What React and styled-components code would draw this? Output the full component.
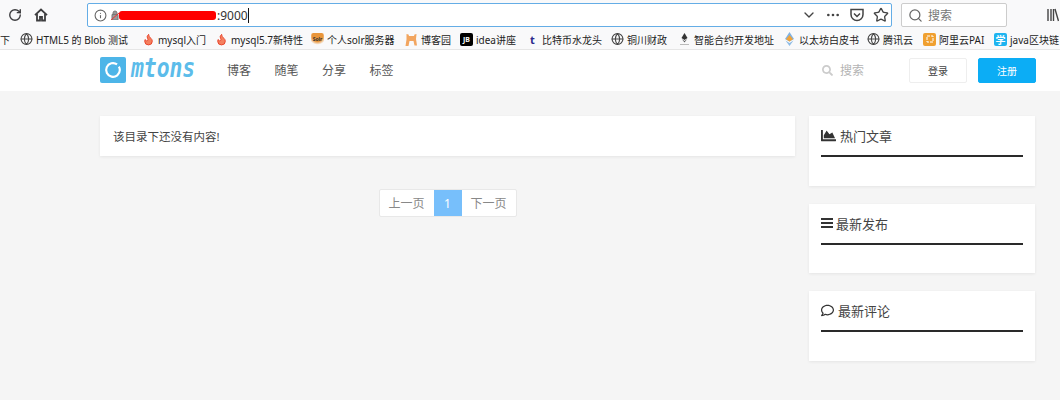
import styled, { createGlobalStyle } from "styled-components";
import { RotateCw, Info, ChevronDown, Ellipsis, Star, Search, Globe, Flame } from "lucide-react";
import { FaChartArea, FaRegComment, FaSearch } from "react-icons/fa";

const Global = createGlobalStyle`
  html, body { margin: 0; padding: 0; background: #f5f5f5; }
  body {
    width: 1060px;
    height: 400px;
    overflow: hidden;
    font-family: "Noto Sans", "Noto Sans CJK SC", sans-serif;
  }
`;

const Toolbar = styled.div`
  display: flex;
  align-items: center;
  height: 30px;
  box-sizing: border-box;
  padding-left: 7px;
  background: #f9f9fa;
  color: #3d3d3f;
`;
const ToolIcon = styled.span`
  display: flex;
  width: 16px;
  margin-right: ${(p) => p.$gap || 0}px;
  justify-content: center;
`;
const UrlBar = styled.div`
  display: flex;
  align-items: center;
  width: 805px;
  height: 24px;
  box-sizing: border-box;
  margin: 0 9px 0 38px;
  padding: 0 2px 0 6px;
  background: #fff;
  border: 1px solid #64ade6;
  border-radius: 2px;
  font-size: 12px;
  color: #333;
`;
const LockIcon = styled.svg`
  margin-left: 4px;
  flex: none;
`;
const Redaction = styled.span`
  width: 97px;
  height: 9px;
  margin: 0 1px 0 0;
  background: #fe0000;
  border-radius: 3px;
`;
const Caret = styled.span`
  width: 1px;
  height: 15px;
  background: #111;
`;
const UrlActions = styled.div`
  display: flex;
  align-items: center;
  gap: 8px;
  margin-left: auto;
  color: #444;
`;
const SearchBox = styled.div`
  display: flex;
  align-items: center;
  gap: 5px;
  width: 106px;
  height: 24px;
  box-sizing: border-box;
  padding-left: 6px;
  background: #fff;
  border: 1px solid #ccc;
  border-radius: 2px;
  font-size: 12px;
  color: #777;
`;
const LibraryIcon = styled.svg`
  margin-left: 40px;
  flex: none;
`;

const BookmarkBar = styled.div`
  display: flex;
  align-items: center;
  gap: 10px;
  height: 20px;
  box-sizing: border-box;
  padding-bottom: 1px;
  background: #f9f9fa;
  border-bottom: 1px solid #e6e6e6;
  overflow: hidden;
  white-space: nowrap;
  font-size: 10px;
  color: #222;
`;
const Bookmark = styled.span`
  display: flex;
  align-items: center;
  gap: 3px;
  flex: none;
  width: ${(p) => p.$w}px;
`;
const Favicon = styled.span`
  display: flex;
  align-items: center;
  justify-content: center;
  width: 13px;
  height: 13px;
  flex: none;
  border-radius: 2px;
  font-size: ${(p) => p.$size || 8}px;
  font-weight: 700;
  background: ${(p) => p.$bg || "transparent"};
  color: ${(p) => p.$color || "#444"};
`;

const Navbar = styled.header`
  display: flex;
  align-items: center;
  height: 41px;
  box-sizing: border-box;
  padding: 0 24px 1px 100px;
  background: #fff;
`;
const Logo = styled.div`
  display: flex;
  align-items: center;
  gap: 5px;
  width: 127px;
  flex: none;
`;
const LogoMark = styled.span`
  display: flex;
  align-items: center;
  justify-content: center;
  width: 26px;
  height: 26px;
  flex: none;
  border-radius: 2px;
  background: #4db5e8;
`;
const LogoText = styled.span`
  flex: none;
  margin-top: -5px;
  font-family: "DejaVu Sans Mono", monospace;
  font-size: 27px;
  line-height: 26px;
  font-weight: 700;
  font-style: italic;
  color: #5cbcea;
  transform: scaleX(0.79);
  transform-origin: left center;
`;
const NavLinks = styled.nav`
  display: flex;
  gap: 23.5px;
  font-size: 12px;
  color: #555;
`;
const NavSearch = styled.div`
  display: flex;
  align-items: center;
  gap: 7px;
  margin-left: auto;
  margin-right: 45px;
  font-size: 12px;
  color: #b4b4b4;
`;
const NavButton = styled.button`
  width: 58px;
  height: 25px;
  margin: 1px 0 0 ${(p) => p.$gap || 0}px;
  padding: 0;
  border: 1px solid ${(p) => (p.$primary ? "#0cadf5" : "#eee")};
  border-radius: 2px;
  background: ${(p) => (p.$primary ? "#0cadf5" : "#fff")};
  color: ${(p) => (p.$primary ? "#fff" : "#444")};
  font-family: inherit;
  font-size: 10px;
`;

const Layout = styled.main`
  display: flex;
  gap: 14px;
  padding: 25px 25px 0 100px;
`;
const Content = styled.section`
  width: 695px;
`;
const Card = styled.div`
  background: #fff;
  box-shadow: 0 1px 3px rgba(0, 0, 0, 0.07);
`;
const EmptyCard = styled(Card)`
  display: flex;
  align-items: center;
  height: 40px;
  padding-left: 13px;
  font-size: 11.5px;
  color: #444;
`;
const Pagination = styled.div`
  display: flex;
  justify-content: center;
  margin-top: 33px;
`;
const PageList = styled.div`
  display: flex;
  height: 28px;
  box-sizing: border-box;
  background: #fff;
  border: 1px solid #e8e8e8;
  border-radius: 2px;
  font-size: 12px;
  color: #888;
`;
const PageItem = styled.span`
  display: flex;
  align-items: center;
  justify-content: center;
  width: ${(p) => (p.$active ? 28 : 54)}px;
  background: ${(p) => (p.$active ? "#77bffb" : "transparent")};
  color: ${(p) => (p.$active ? "#fff" : "inherit")};
`;
const Sidebar = styled.aside`
  display: flex;
  flex-direction: column;
  gap: 18px;
  width: 226px;
`;
const Widget = styled(Card)`
  height: 69.5px;
  box-sizing: border-box;
  padding: 0 12px;
`;
const WidgetTitle = styled.h3`
  display: flex;
  align-items: center;
  gap: ${(p) => p.$gap}px;
  height: 39px;
  margin: 0;
  border-bottom: 2px solid #2a2a2a;
  font-size: 13px;
  font-weight: 400;
  color: #444;
`;

const bookmarks = [
  { w: 10, text: "下" },
  { w: 112, text: "HTML5 的 Blob 测试", icon: "globe" },
  { w: 63, text: "mysql入门", icon: "flame" },
  { w: 86, text: "mysql5.7新特性", icon: "flame" },
  { w: 84, text: "个人solr服务器", icon: "solr" },
  { w: 45, text: "博客园", icon: "cat" },
  { w: 56, text: "idea讲座", icon: "jb" },
  { w: 75, text: "比特币水龙头", icon: "t" },
  { w: 57, text: "铜川财政", icon: "globe" },
  { w: 95, text: "智能合约开发地址", icon: "eth" },
  { w: 74, text: "以太坊白皮书", icon: "ethColor" },
  { w: 46, text: "腾讯云", icon: "globe" },
  { w: 61, text: "阿里云PAI", icon: "pai" },
  { w: 70, text: "java区块链", icon: "xue" },
];

function BookmarkIcon({ icon }) {
  switch (icon) {
    case "globe":
      return <Favicon><Globe size={14} strokeWidth={2} /></Favicon>;
    case "flame":
      return <Favicon $color="#e8452c"><Flame size={13} fill="#f4805f" strokeWidth={1.8} /></Favicon>;
    case "solr":
      return (
        <Favicon $size={5} $color="#333" style={{ background: "radial-gradient(circle at 50% 25%, #e9953a 45%, transparent 72%)" }}>
          Solr
        </Favicon>
      );
    case "cat":
      return (
        <Favicon>
          <svg width="13" height="13" viewBox="0 0 13 13">
            <path d="M1.500 1l2 .5 .5 1.500h5l.5-1.500 2-.5-.5 5 1 6.500H9.500L8.500 8h-4l-1 5H.500l1-6.500z" fill="#f2a55f" />
          </svg>
        </Favicon>
      );
    case "jb":
      return <Favicon $bg="#000" $color="#fff" $size={7}>JB</Favicon>;
    case "t":
      return <Favicon $color="#2b2b8c" $size={11}>t</Favicon>;
    case "eth":
      return (
        <Favicon>
          <svg width="13" height="13" viewBox="0 0 13 13">
            <path d="M6.500 0L9.500 5 6.500 7 3.500 5z" fill="#333" />
            <path d="M3.800 6L6.500 8 9.200 6 6.500 9.500z" fill="#555" />
            <path d="M2 11.500h9" stroke="#bbb" strokeWidth="1" />
          </svg>
        </Favicon>
      );
    case "ethColor":
      return (
        <Favicon>
          <svg width="13" height="14" viewBox="0 0 13 14">
            <path d="M6.500 0L11 7 6.500 9.500 2 7z" fill="#7fb2e3" />
            <path d="M6.500 3L10 7.200 6.500 9.500 3 7.200z" fill="#f0a33a" />
            <path d="M2.500 8.500L6.500 14 10.500 8.500 6.500 11z" fill="#8dbbe6" />
          </svg>
        </Favicon>
      );
    case "pai":
      return (
        <Favicon $bg="#f0a030">
          <svg width="10" height="10" viewBox="0 0 10 10">
            <path d="M2 2h6v6H2z" fill="none" stroke="#fff" strokeDasharray="3 1" />
          </svg>
        </Favicon>
      );
    case "xue":
      return <Favicon $bg="#1eb4f0" $color="#fff" $size={10}>学</Favicon>;
    default:
      return null;
  }
}

const App = () => (
  <>
    <Global />
    <Toolbar>
      <ToolIcon $gap={10}><RotateCw size={14} strokeWidth={2.4} /></ToolIcon>
      <ToolIcon>
        <svg width="14" height="14" viewBox="0 0 14 14" fill="none" stroke="#3d3d3f" strokeWidth="1.800">
          <path d="M1 7.200L7 1.500l6 5.700" />
          <path d="M3 6v6.500h3V9h2v3.500h3V6" />
        </svg>
      </ToolIcon>
      <UrlBar>
        <Info size={13} color="#666" />
        <LockIcon width="8" height="10" viewBox="0 0 8 10">
          <path d="M2 4.500V3a2 2 0 0 1 4 0v1.500M1 4.500h6V10H1z" fill="#999" stroke="#777" strokeWidth="1" />
          <path d="M0 10L8 3" stroke="#e33" strokeWidth="1" />
        </LockIcon>
        <Redaction />
        <span>:9000</span>
        <Caret />
        <UrlActions>
          <ChevronDown size={16} />
          <Ellipsis size={16} />
          <svg width="16" height="16" viewBox="0 0 16 16" fill="none" stroke="#444" strokeWidth="1.500">
            <path d="M2 2.500h12v5a6 6 0 0 1-12 0z" />
            <path d="M5 6.500l3 3 3-3" />
          </svg>
          <Star size={16} />
        </UrlActions>
      </UrlBar>
      <SearchBox>
        <Search size={15} color="#666" />
        搜索
      </SearchBox>
      <LibraryIcon width="12" height="14" viewBox="0 0 12 14" fill="none" stroke="#444" strokeWidth="1.400">
        <path d="M1 1v12M4 1v12M6.500 1v12M8 1l3.500 12" />
      </LibraryIcon>
    </Toolbar>
    <BookmarkBar>
      {bookmarks.map((b) => (
        <Bookmark key={b.text} $w={b.w}>
          <BookmarkIcon icon={b.icon} />
          {b.text}
        </Bookmark>
      ))}
    </BookmarkBar>
    <Navbar>
      <Logo>
        <LogoMark>
          <svg width="18" height="18" viewBox="0 0 20 20" fill="none" stroke="#fff" strokeWidth="2.400">
            <path d="M14.500 3.800A7.600 7.600 0 1 0 17.600 10c0-1.400-.4-2.700-1.100-3.800" />
          </svg>
        </LogoMark>
        <LogoText>mtons</LogoText>
      </Logo>
      <NavLinks>
        <span>博客</span>
        <span>随笔</span>
        <span>分享</span>
        <span>标签</span>
      </NavLinks>
      <NavSearch>
        <FaSearch size={11} color="#ccc" />
        搜索
      </NavSearch>
      <NavButton>登录</NavButton>
      <NavButton $primary $gap={11}>注册</NavButton>
    </Navbar>
    <Layout>
      <Content>
        <EmptyCard>该目录下还没有内容!</EmptyCard>
        <Pagination>
          <PageList>
            <PageItem>上一页</PageItem>
            <PageItem $active>1</PageItem>
            <PageItem>下一页</PageItem>
          </PageList>
        </Pagination>
      </Content>
      <Sidebar>
        <Widget>
          <WidgetTitle $gap={4}><FaChartArea size={15} color="#333" />热门文章</WidgetTitle>
        </Widget>
        <Widget>
          <WidgetTitle $gap={3}>
            <svg width="12" height="10" viewBox="0 0 12 10" fill="#333">
              <rect width="12" height="2" />
              <rect y="4" width="12" height="2" />
              <rect y="8" width="12" height="2" />
            </svg>
            最新发布
          </WidgetTitle>
        </Widget>
        <Widget>
          <WidgetTitle $gap={4}><FaRegComment size={13} color="#333" />最新评论</WidgetTitle>
        </Widget>
      </Sidebar>
    </Layout>
  </>
);

export default App;
